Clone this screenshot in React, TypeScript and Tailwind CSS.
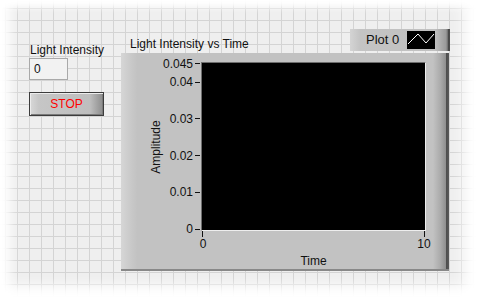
import React from "react";

// y position of a value on the amplitude axis, relative to plot top
const yOf = (v: number) => 167 - v * 3675;

const yTicks = [
    { v: 0.045, label: "0.045" },
    { v: 0.04, label: "0.04" },
    { v: 0.03, label: "0.03" },
    { v: 0.02, label: "0.02" },
    { v: 0.01, label: "0.01" },
    { v: 0, label: "0" },
];

export default function App() {
    return (
        <div className="relative w-[478px] h-[300px] overflow-hidden bg-[#efefef] bg-[linear-gradient(to_right,#d4d4d4_1px,transparent_1px),linear-gradient(to_bottom,#d4d4d4_1px,transparent_1px)] bg-size-[12px_12px] bg-position-[5px_8px] font-['Liberation_Sans',Arial,sans-serif] text-[12px] leading-[14px] text-[#111]">
            {/* front panel */}
            <div className="flex items-start pt-[29px] pl-[29px]">

                {/* left column: indicator + stop button */}
                <div className="w-[76px] flex flex-col pt-[14px]">
                    <div className="pl-px">Light Intensity</div>
                    <div className="mt-px w-[39px] h-[22px] border border-[#a9a9a9] bg-[#f2f2f2] pl-[4px] flex items-center">0</div>
                    <button className="mt-[12px] w-[75px] h-[24px] border border-[#3c3c3c] bg-[linear-gradient(to_right,#d8d8d8,#c6c6c6_12%,#bebebe_82%,#8c8c8c)] shadow-[inset_1px_1px_0_#ececec,inset_-1px_-1px_0_#7a7a7a] text-[#ff0000] flex items-center justify-center">
                        STOP
                    </button>
                </div>

                {/* right column: waveform chart */}
                <div className="ml-[16px] w-[329px] flex flex-col">
                    <div className="h-[24px] flex justify-between items-start">
                        <div className="pl-[9px] mt-[8px]">Light Intensity vs Time</div>
                        <div className="w-[100px] h-[22px] flex items-center bg-[linear-gradient(to_right,#d4d4d4,#c4c4c4_10%,#c0c0c0_85%,#9a9a9a_calc(100%-4px),#6a6a6a_calc(100%-2px),#4a4a4a_calc(100%-2px))]">
                            <span className="pl-[16px] w-[57px] text-[13px]">Plot 0</span>
                            <svg width="28" height="18" viewBox="0 0 28 18" className="bg-black">
                                <path d="M1 13 L11 3 L19 12 L27 3" stroke="#fff" strokeWidth="1" fill="none" />
                            </svg>
                        </div>
                    </div>

                    <div className="w-[328px] h-[218px] flex flex-col pt-[9px] bg-[linear-gradient(to_right,#d6d6d6,#c9c9c9_3%,#c2c2c2_5%,#c2c2c2_calc(100%-16px),#acacac_calc(100%-9px),#8e8e8e_calc(100%-3px),#4c4c4c_calc(100%-3px),#5a5a5a)] shadow-[inset_0_-2px_0_#888]">
                        <div className="flex">
                            {/* y axis */}
                            <div className="relative w-[80px] h-[169px]">
                                <div className="absolute left-[35px] top-[85px] -translate-x-1/2 -translate-y-1/2 -rotate-90 whitespace-nowrap">Amplitude</div>
                                {yTicks.map((t) => (
                                    <div key={t.label} className="absolute right-0 flex items-center h-[14px]" style={{ top: yOf(t.v) - 7 }}>
                                        <span>{t.label}</span>
                                        <span className="ml-[2px] mr-[1px] w-[5px] h-px bg-[#111]" />
                                    </div>
                                ))}
                            </div>
                            {/* plot area */}
                            <div className="w-[225px] h-[169px] bg-black border border-[#6e6e6e] border-b-[#eeeeee] border-r-[#eeeeee]" />
                        </div>

                        {/* x axis */}
                        <div className="ml-[80px] w-[225px] relative h-[20px]">
                            <span className="absolute left-[1px] top-0 w-px h-[6px] bg-[#111]" />
                            <span className="absolute left-[223px] top-0 w-px h-[6px] bg-[#111]" />
                            <span className="absolute left-[2px] top-[6px] -translate-x-1/2">0</span>
                            <span className="absolute left-[223px] top-[6px] -translate-x-1/2">10</span>
                        </div>
                        <div className="ml-[80px] w-[225px] mt-[3px] text-center">Time</div>
                    </div>
                </div>
            </div>

            {/* window edge fade */}
            <div className="pointer-events-none absolute inset-0 shadow-[inset_0_6px_8px_0_#fff,inset_10px_0_12px_0_#fff,inset_-14px_0_14px_0_#fff,inset_0_-14px_12px_0_#fff]" />
        </div>
    );
}
